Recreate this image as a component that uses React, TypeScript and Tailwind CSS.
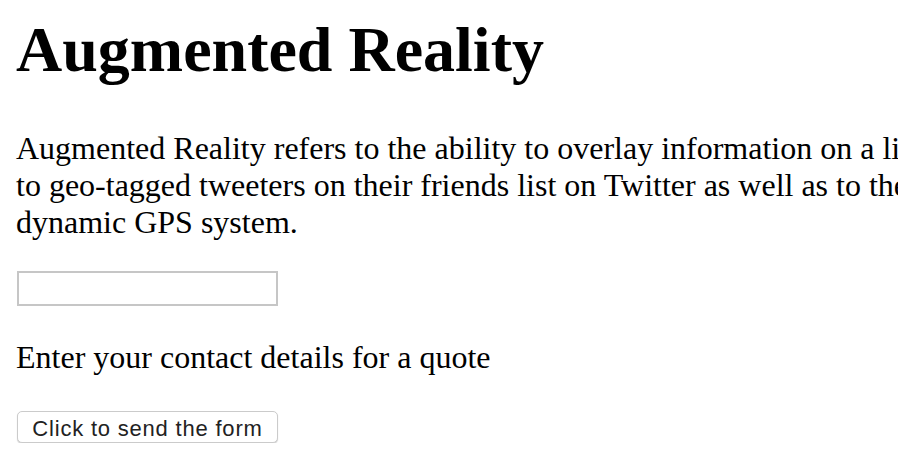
export default function App() {
  const lines = [
    "Augmented Reality refers to the ability to overlay information on a live camera view of the world around you, from",
    "to geo-tagged tweeters on their friends list on Twitter as well as to the nearest shops and restaurants through a",
    "dynamic GPS system.",
  ];

  return (
    <div className="w-full overflow-hidden bg-white pl-4 pt-[13px] text-black font-['Liberation_Serif','Times_New_Roman',serif]">
      <h1 className="m-0 text-[64px] font-bold leading-[74px] whitespace-nowrap">Augmented Reality</h1>

      {/* intro copy runs past the window edge */}
      <p className="mt-[43px] text-[32px] leading-[37px]">
        {lines.map((line) => (
          <span key={line} className="block whitespace-nowrap">
            {line}
          </span>
        ))}
      </p>

      <form onSubmit={(e) => e.preventDefault()}>
        <input
          type="text"
          className="mt-[30px] block h-[35px] w-[261px] ml-px border-2 border-[#c6c6c6] bg-white outline-none"
        />

        <p className="mt-[33px] text-[32px] leading-[37px] whitespace-nowrap">Enter your contact details for a quote</p>

        <button
          type="submit"
          className="mt-[35px] ml-px block h-[32px] w-[261px] rounded-[5px] border border-[#cbcbcb] bg-white text-center text-[22px] tracking-[0.8px] text-[#222] shadow-[0_1px_1px_rgba(0,0,0,0.18)] font-['Liberation_Sans',Arial,sans-serif]"
        >
          Click to send the form
        </button>
      </form>
    </div>
  );
}
